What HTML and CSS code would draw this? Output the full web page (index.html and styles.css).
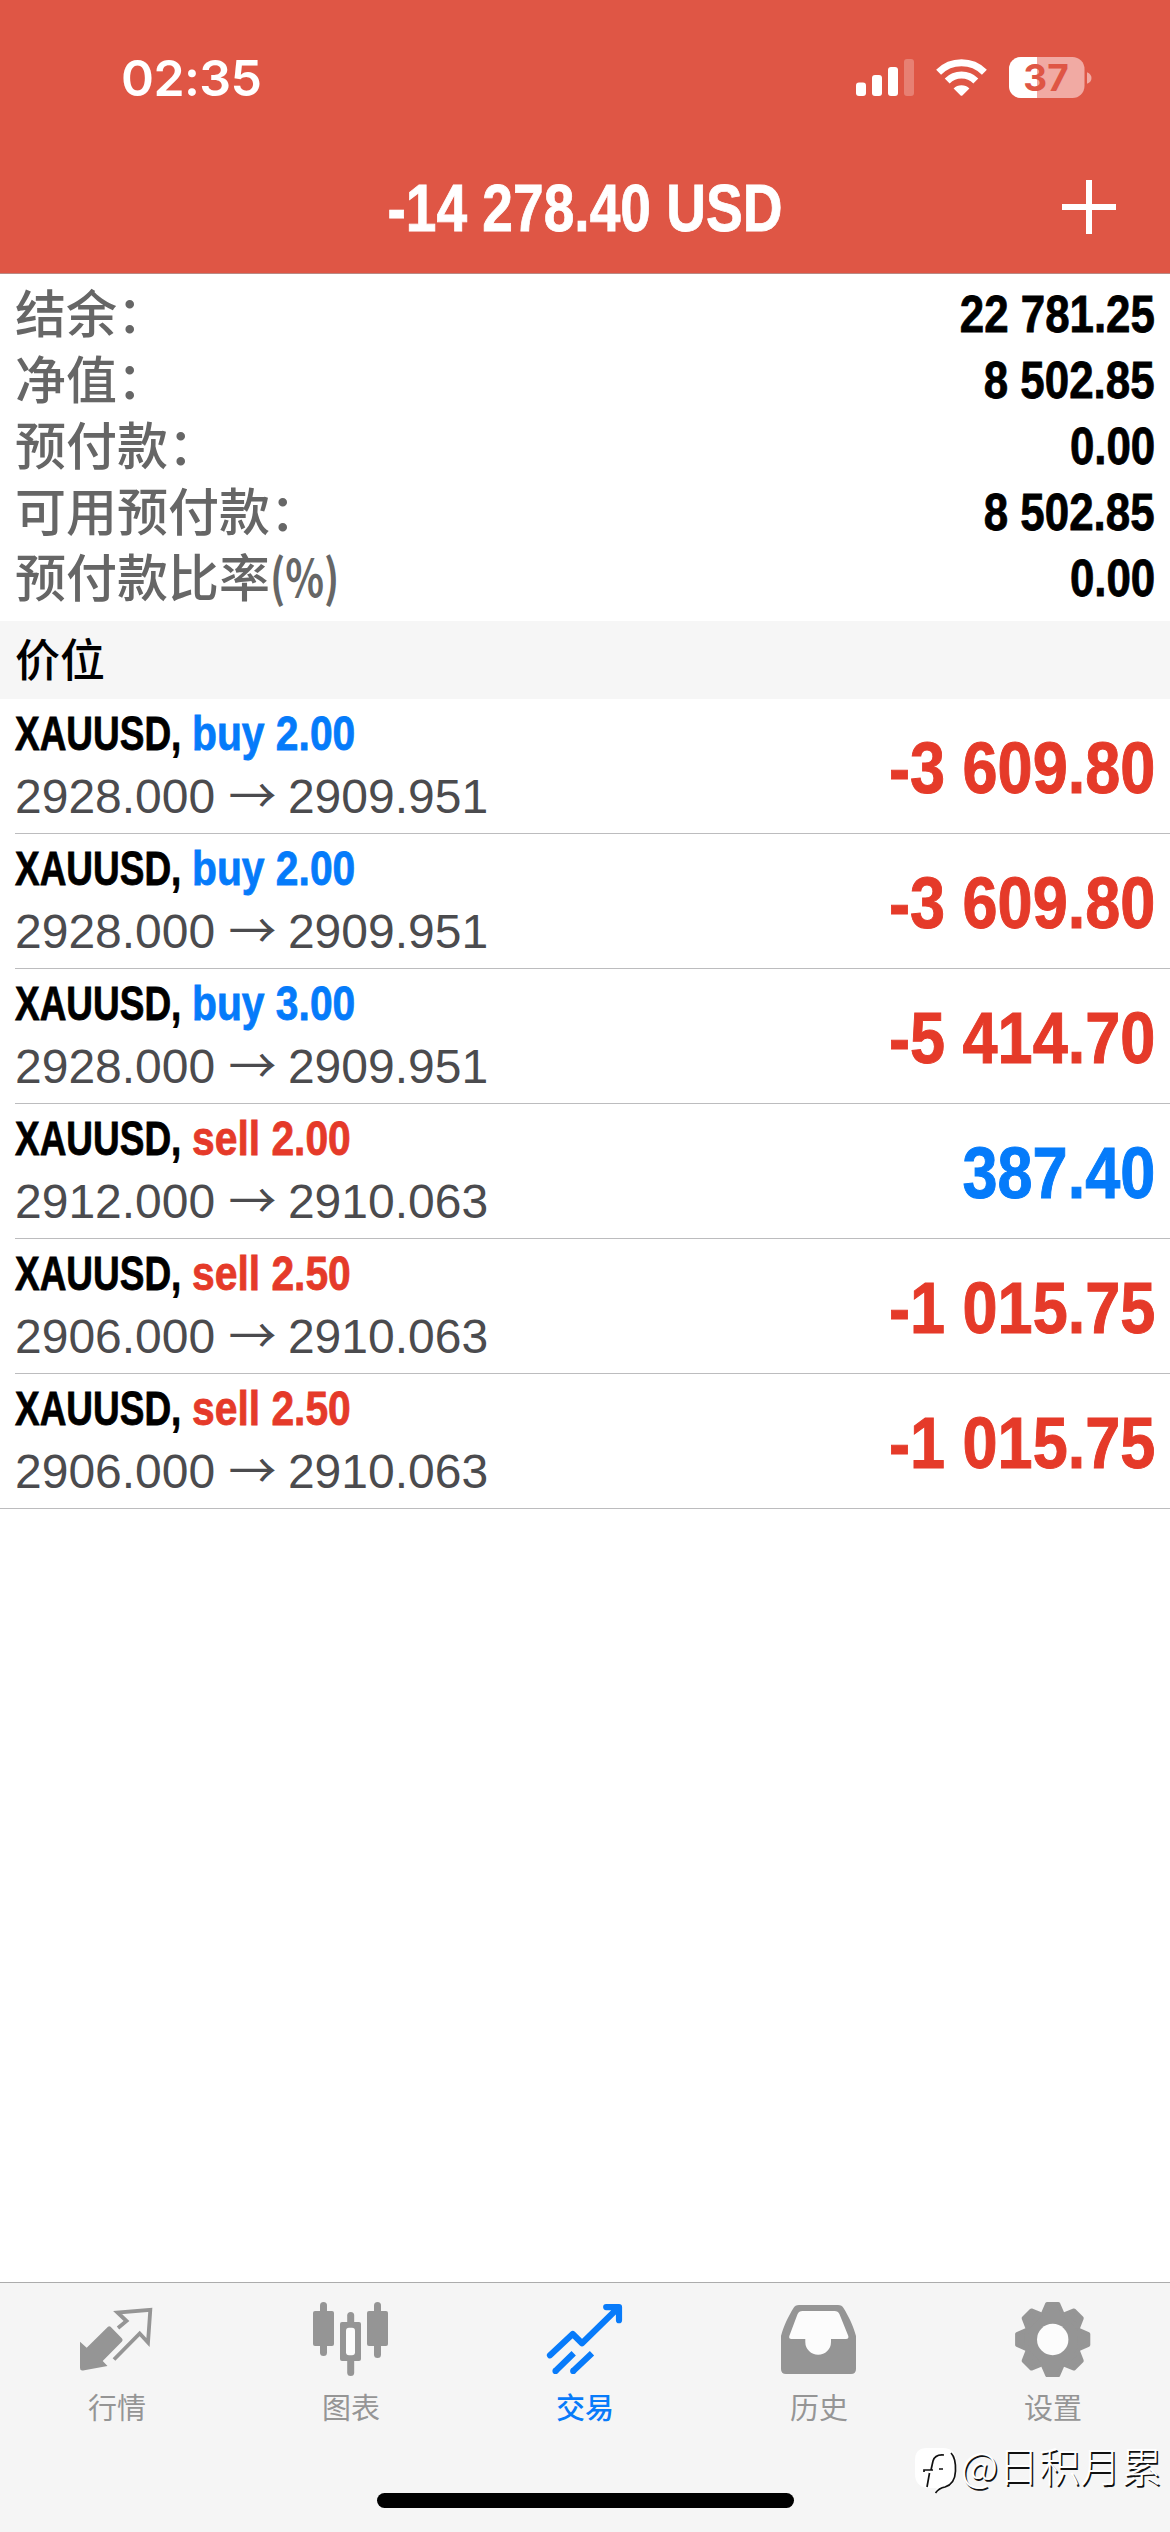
FILE: index.html
```html
<!DOCTYPE html>
<html lang="zh-CN">
<head>
<meta charset="utf-8">
<title>交易</title>
<link rel="stylesheet" href="styles.css">
</head>
<body>
<div class="app">
  <header class="header">
    <div class="status">
      <span class="time">02:35</span>
      <div class="status-icons">
        <svg class="signal" width="59" height="38" viewBox="0 0 59 38" fill="#fff">
          <rect x="0" y="23.5" width="10" height="13.5" rx="3"/>
          <rect x="16" y="16" width="10" height="21" rx="3"/>
          <rect x="32" y="8" width="10" height="29" rx="3"/>
          <rect x="48" y="0" width="10" height="37" rx="3" opacity=".25"/>
        </svg>
        <svg class="wifi" width="51" height="38" viewBox="0 0 51 38">
          <g fill="none" stroke="#fff" stroke-width="7">
            <path d="M2.6 13.2a32.5 32.5 0 0 1 45.8 0"/>
            <path d="M11.2 22a20.3 20.3 0 0 1 28.6 0"/>
          </g>
          <path d="M17.6 29.4a11.2 11.2 0 0 1 15.8 0L26.6 36.2a1.6 1.6 0 0 1-2.2 0z" fill="#fff"/>
        </svg>
        <svg class="battery" width="84" height="42" viewBox="0 0 84 42">
          <rect x="0" y="0" width="75.5" height="41" rx="12" fill="#f1aaa3"/>
          <path d="M12 0H28V41H12A12 12 0 0 1 0 29V12A12 12 0 0 1 12 0z" fill="#fff"/>
          <path d="M78 15.2c6 2.200 6 9.400 0 11.600z" fill="#f1aaa3"/>
          <text x="37" y="34" text-anchor="middle" class="battery-level">37</text>
        </svg>
      </div>
    </div>
    <div class="title-bar">
      <h1 class="title">-14 278.40 USD</h1>
      <svg class="add" width="54" height="54" viewBox="0 0 54 54" stroke="#fff" stroke-width="6"><path d="M27 0V54M0 27H54"/></svg>
    </div>
  </header>

  <section class="summary">
    <div class="sum-row"><span class="label">结余：</span><span class="value">22 781.25</span></div>
    <div class="sum-row"><span class="label">净值：</span><span class="value">8 502.85</span></div>
    <div class="sum-row"><span class="label">预付款：</span><span class="value">0.00</span></div>
    <div class="sum-row"><span class="label">可用预付款：</span><span class="value">8 502.85</span></div>
    <div class="sum-row"><span class="label">预付款比率<span class="percent">(%)</span></span><span class="value">0.00</span></div>
  </section>

  <h2 class="section-title">价位</h2>

  <main class="positions">
    <div class="position"><div class="info"><div class="order"><span class="symbol">XAUUSD,</span><span class="side buy">buy 2.00</span></div><div class="prices">2928.000 <span class="arrow">→</span> 2909.951</div></div><span class="profit loss">-3 609.80</span></div>
    <div class="position"><div class="info"><div class="order"><span class="symbol">XAUUSD,</span><span class="side buy">buy 2.00</span></div><div class="prices">2928.000 <span class="arrow">→</span> 2909.951</div></div><span class="profit loss">-3 609.80</span></div>
    <div class="position"><div class="info"><div class="order"><span class="symbol">XAUUSD,</span><span class="side buy">buy 3.00</span></div><div class="prices">2928.000 <span class="arrow">→</span> 2909.951</div></div><span class="profit loss">-5 414.70</span></div>
    <div class="position"><div class="info"><div class="order"><span class="symbol">XAUUSD,</span><span class="side sell">sell 2.00</span></div><div class="prices">2912.000 <span class="arrow">→</span> 2910.063</div></div><span class="profit gain">387.40</span></div>
    <div class="position"><div class="info"><div class="order"><span class="symbol">XAUUSD,</span><span class="side sell">sell 2.50</span></div><div class="prices">2906.000 <span class="arrow">→</span> 2910.063</div></div><span class="profit loss">-1 015.75</span></div>
    <div class="position"><div class="info"><div class="order"><span class="symbol">XAUUSD,</span><span class="side sell">sell 2.50</span></div><div class="prices">2906.000 <span class="arrow">→</span> 2910.063</div></div><span class="profit loss">-1 015.75</span></div>
  </main>

  <footer class="footer">
    <nav class="tabs">
      <div class="tab">
        <svg width="78" height="78" viewBox="0 0 78 78">
          <path d="M2 41.700L8.700 47.700 30 26.800Q31.300 25.500 32.600 26.800L44 38.600Q45.300 40 44 41.500L24.700 61 29.500 66 5 70.500Q2 71 2 68z" fill="currentColor"/>
          <path d="M40 28L48.500 21 39.500 12.500 72.300 9.800 70 42.500 61.700 33.500 36 59.500" fill="none" stroke="currentColor" stroke-width="3.800"/>
        </svg>
        <span>行情</span>
      </div>
      <div class="tab">
        <svg width="78" height="78" viewBox="0 0 78 78" fill="currentColor">
          <rect x="1" y="11" width="21" height="35" rx="2"/><rect x="8" y="2" width="7" height="54" rx="3.500"/>
          <rect x="35.200" y="12" width="7" height="64" rx="3.500"/><rect x="28" y="22" width="21" height="39" rx="2"/><rect x="34" y="27.700" width="9" height="27.600" rx="3" fill="#fcfcfc"/>
          <rect x="55" y="11" width="21" height="35" rx="2"/><rect x="62" y="2" width="7" height="56" rx="3.500"/>
        </svg>
        <span>图表</span>
      </div>
      <div class="tab active">
        <svg width="78" height="78" viewBox="0 0 78 78" fill="none" stroke="currentColor" stroke-width="6.200" stroke-linecap="round" stroke-linejoin="round">
          <path d="M4 55.300L26.700 34 36 43.300 72 8M60.200 7.100H73V20.200"/>
          <path d="M9.500 71L27.700 53.200M27.200 71L46 53.200" stroke-linecap="butt"/>
          <path d="M9.500 71h.01M27.200 71h.01"/>
        </svg>
        <span>交易</span>
      </div>
      <div class="tab">
        <svg width="78" height="78" viewBox="0 0 78 78">
          <path d="M19 5H58Q62 5 63.500 8C69 17 73 25 76 36V69Q76 74 71 74H6Q1 74 1 69V36C4 25 8 17 13.500 8Q15 5 19 5z" fill="currentColor"/>
          <path d="M22.500 11H54.500Q58 11 59.500 14.200L68.300 36Q69 39 66 39H51V42A12.850 12.850 0 0 1 25.300 42V39H11.500Q8.500 39 9.300 36L17.500 14.200Q19 11 22.500 11z" fill="#fcfcfc"/>
        </svg>
        <span>历史</span>
      </div>
      <div class="tab">
        <svg width="78" height="78" viewBox="-38.700 -39.500 78 78" fill="currentColor">
          <defs><path id="tooth" d="M-9.500 -26.500L-5.500 -35.600H5.500L9.500 -26.500z" stroke="currentColor" stroke-width="4" stroke-linejoin="round"/></defs>
          <circle r="29"/>
          <use href="#tooth"/><use href="#tooth" transform="rotate(45)"/><use href="#tooth" transform="rotate(90)"/><use href="#tooth" transform="rotate(135)"/>
          <use href="#tooth" transform="rotate(180)"/><use href="#tooth" transform="rotate(225)"/><use href="#tooth" transform="rotate(270)"/><use href="#tooth" transform="rotate(315)"/>
          <circle r="15.700" fill="#fcfcfc"/>
        </svg>
        <span>设置</span>
      </div>
    </nav>
    <div class="home-indicator"></div>
    <div class="watermark">
      <svg width="43" height="48" viewBox="0 0 43 48">
        <path d="M12 0H28Q41 0 41 14V25Q41 38 29 40Q23 42 20 46Q20 42 22 40H12Q0 38 0 26V12Q0 0 12 0z" fill="#fff"/>
        <path d="M36 5Q41 10 40.500 23Q40 36 30 39Q24 40 20.500 45M29 7Q20 6 18 13L16 22M14.500 25L12 39M9 24V22H18M24 21H28" fill="none" stroke="#111" stroke-width="1.700"/>
      </svg>
      <span>@日积月累</span>
    </div>
  </footer>
</div>
</body>
</html>
```
FILE: styles.css
```css
* { box-sizing: border-box; margin: 0; }

body {
  background: #fff;
  color: #000;
  font-family: "Liberation Sans", "Noto Sans CJK SC", sans-serif;
}

.app {
  display: flex;
  flex-direction: column;
  width: 1170px;
  height: 2532px;
  overflow: hidden;
}

.header {
  height: 274px;
  background: #df5645;
  border-bottom: 1px solid #b98a84;
  color: #fff;
}

.status {
  display: flex;
  justify-content: space-between;
  align-items: center;
  height: 156px;
  padding: 0 77px 0 121px;
}

.time {
  font: 600 50px/60px Inter, sans-serif;
  letter-spacing: -0.6px;
}

.status-icons { display: flex; align-items: center; }
.wifi { margin-left: 21px; }
.battery { margin-left: 22px; overflow: visible; }
.battery-level { font: 700 37px Inter, sans-serif; fill: #df5645; }

.title-bar {
  display: grid;
  grid-template-columns: 108px 1fr 54px;
  align-items: center;
  height: 101px;
  padding: 0 54px 0 0;
}

.title {
  grid-column: 2;
  padding-top: 2px;
  text-align: center;
  white-space: nowrap;
  font-size: 66px;
  line-height: 76px;
  -webkit-text-stroke: 0.8px currentColor;
  transform: scaleX(0.835);
}

.summary { height: 347px; padding: 8px 15px 0; }

.sum-row {
  display: flex;
  justify-content: space-between;
  height: 66px;
}

.label {
  font: 500 51px/58px "Noto Sans CJK SC", sans-serif;
  color: #666;
}

.percent {
  display: inline-block;
  font-weight: 700;
  transform: scaleX(0.79);
  transform-origin: left;
}

.value {
  font-size: 51px;
  font-weight: 700;
  line-height: 66px;
  -webkit-text-stroke: 0.8px currentColor;
  transform: scaleX(0.86);
  transform-origin: right;
}

.section-title {
  height: 78px;
  padding-left: 15px;
  background: #f6f6f6;
  font: 500 45px/74px "Noto Sans CJK SC", sans-serif;
}

.position {
  display: flex;
  justify-content: space-between;
  align-items: center;
  height: 135px;
  margin-left: 15px;
  padding-right: 15px;
  border-bottom: 1px solid #bcbcbe;
}

.position:last-child { margin-left: 0; padding-left: 15px; }

.order {
  display: flex;
  height: 62px;
  font-size: 48px;
  font-weight: 700;
  line-height: 62px;
  white-space: nowrap;
  -webkit-text-stroke: 0.8px currentColor;
}

.symbol {
  display: flex;
  width: 177px;
  transform: scaleX(0.77);
  transform-origin: left;
}

.side { transform: scaleX(0.85); transform-origin: left; }

.prices {
  height: 64px;
  font-size: 48px;
  line-height: 64px;
  color: #4b4b4e;
  white-space: pre;
}

.arrow {
  margin-right: -2px;
  font-family: "Noto Sans CJK SC", sans-serif;
  line-height: 1;
}

.profit {
  padding-top: 4px;
  font-size: 72px;
  font-weight: 700;
  -webkit-text-stroke: 1px currentColor;
  transform: scaleX(0.875);
  transform-origin: right;
}

.buy, .gain { color: #057bfa; }
.sell, .loss { color: #e53a29; }

.footer {
  position: relative;
  height: 250px;
  margin-top: auto;
  background: #f5f5f5;
  border-top: 1px solid #acacac;
}

.tabs { display: grid; grid-template-columns: repeat(5, 1fr); padding-top: 17px; }

.tab {
  display: flex;
  flex-direction: column;
  align-items: center;
  color: #959595;
}

.tab span {
  margin-top: 7px;
  font: 400 29px/42px "Noto Sans CJK SC", sans-serif;
}

.tab.active { color: #087bfa; }
.tab.active span { font-weight: 500; }

.home-indicator {
  width: 417px;
  height: 15px;
  margin: 66px auto 0;
  border-radius: 8px;
  background: #000;
}

.watermark {
  position: absolute;
  right: 8px;
  bottom: 35px;
  display: flex;
  align-items: center;
  height: 50px;
}

.watermark span {
  margin: -16px 0 0 3px;
  font: 300 41px/50px "Noto Sans CJK SC", sans-serif;
  color: #fff;
  text-shadow: 1.5px 1.5px 0 #111;
}
```
